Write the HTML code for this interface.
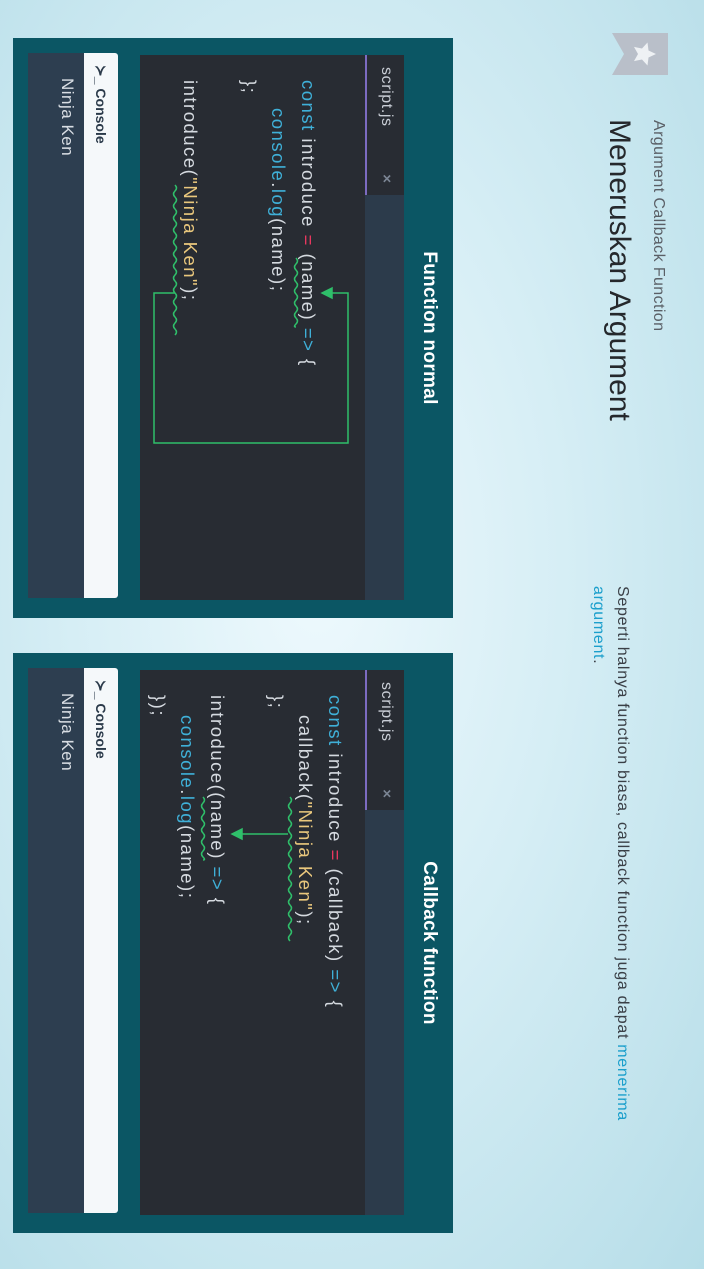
<!DOCTYPE html>
<html><head><meta charset="utf-8"><style>
html,body{margin:0;padding:0;width:704px;height:1269px;overflow:hidden;}
#stage{position:absolute;left:0;top:0;width:1269px;height:704px;transform-origin:0 0;transform:translateX(704px) rotate(90deg);
background:radial-gradient(ellipse at 45% 55%,#eef9fd 0%,#d6eef5 45%,#b6dde8 100%);font-family:"Liberation Sans",sans-serif;overflow:hidden;}
.abs{position:absolute;}
.panel{position:absolute;top:251px;width:580px;height:440px;background:#0b5664;}
.ptitle{position:absolute;left:0;right:0;top:13px;text-align:center;color:#fff;font-weight:bold;font-size:19px;letter-spacing:0.3px;}
.editor{position:absolute;left:17px;top:49px;width:545px;height:264px;background:#282c33;}
.tabbar{position:absolute;left:0;top:0;right:0;height:39px;background:#2c3b4b;}
.tab{position:absolute;left:0;top:0;width:140px;height:37px;background:#282c33;border-bottom:2px solid #7c6bc1;}
.tab span{position:absolute;left:12px;top:9px;color:#c9ced6;font-size:16px;letter-spacing:0.6px;}
.tab i{position:absolute;right:12px;top:9px;color:#7b8594;font-style:normal;font-size:15px;font-weight:bold;}
.code{position:absolute;left:25px;top:81px;color:#d5dae0;font-size:18.5px;line-height:29.5px;white-space:pre;letter-spacing:1.5px;}
.k{color:#3fb0d8}.o{color:#e8375f}.s{color:#e9c77d}
.ind{display:inline-block;width:28px}
.ind2{display:inline-block;width:20px}
.con{position:absolute;left:15px;top:335px;width:545px;}
.conh{height:34px;background:#f5f8fa;border-radius:3px 3px 0 0;color:#2b3a4a;font-weight:bold;font-size:14px;line-height:34px;padding-left:12px;}
.conb{height:54px;padding-top:2px;background:#2d3e50;color:#d9dee4;font-size:17px;line-height:30px;padding-left:25px;letter-spacing:0.5px;}
</style></head><body><div id="stage">
<svg class="abs" style="left:33px;top:36px" width="42" height="56" viewBox="0 0 42 56"><path d="M0 0H42V56L21 44L0 56Z" fill="#b9bfc9"/><path d="M21 12l3.5 7.5 8 1-6 5.5 1.6 8L21 30l-7.1 4 1.6-8-6-5.5 8-1z" fill="#eef1f4"/></svg>
<div class="abs" style="left:120px;top:37px;font-size:16px;color:#5a5f66;letter-spacing:0.4px">Argument Callback Function</div>
<div class="abs" style="left:119px;top:68px;font-size:30px;color:#25282c">Meneruskan Argument</div>
<div class="abs" style="left:586px;top:70px;font-size:16px;color:#3a3f46;line-height:24px;width:590px;letter-spacing:0.7px">Seperti halnya function biasa, callback function juga dapat <span style="color:#1b9fcc">menerima argument</span>.</div>

<div class="panel" style="left:38px">
<div class="ptitle">Function normal</div>
<div class="editor"><div class="tabbar"><div class="tab"><span>script.js</span><i>×</i></div></div>
<div class="code"><span class="k">const</span> introduce <span class="o">=</span> (name) <span class="k">=&gt;</span> {
<span class="ind"></span><span class="k">console</span>.<span class="k">log</span>(name);
};

introduce(<span class="s">"Ninja Ken"</span>);</div></div>
<div class="con"><div class="conh">≻_ Console</div><div class="conb">Ninja Ken</div></div>
</div>

<div class="panel" style="left:653px">
<div class="ptitle">Callback function</div>
<div class="editor"><div class="tabbar"><div class="tab"><span>script.js</span><i>×</i></div></div>
<div class="code" style="top:54px"><span class="k">const</span> introduce <span class="o">=</span> (callback) <span class="k">=&gt;</span> {
<span class="ind2"></span>callback(<span class="s">"Ninja Ken"</span>);
};

introduce((name) <span class="k">=&gt;</span> {
<span class="ind2"></span><span class="k">console</span>.<span class="k">log</span>(name);
});</div></div>
<div class="con"><div class="conh">≻_ Console</div><div class="conb">Ninja Ken</div></div>
</div>

<svg class="abs" style="left:0;top:0" width="1269" height="704" fill="none" stroke="#2fbf6a" stroke-width="1.5">
<path d="M258 408q3-3 6 0t6 0t6 0t6 0t6 0t6 0t6 0t6 0t6 0t6 0t6 0t3 0"/>
<path d="M185 529q3-3 6 0t6 0t6 0t6 0t6 0t6 0t6 0t6 0t6 0t6 0t6 0t6 0t6 0t6 0t6 0t6 0t6 0t6 0t6 0t6 0t6 0t6 0t6 0t6 0t6 0"/>
<path d="M293 529V550H443V356H293V376"/>
<path d="M288 372L293 382L298 372Z" fill="#2fbf6a"/>
<path d="M797 414q3-3 6 0t6 0t6 0t6 0t6 0t6 0t6 0t6 0t6 0t6 0t6 0t6 0t6 0t6 0t6 0t6 0t6 0t6 0t6 0t6 0t6 0t6 0t6 0t6 0"/>
<path d="M797 501q3-3 6 0t6 0t6 0t6 0t6 0t6 0t6 0t6 0t6 0t6 0t3 0"/>
<path d="M834 416V464"/>
<path d="M829 462L834 472L839 462Z" fill="#2fbf6a"/>
</svg>
</div></body></html>
